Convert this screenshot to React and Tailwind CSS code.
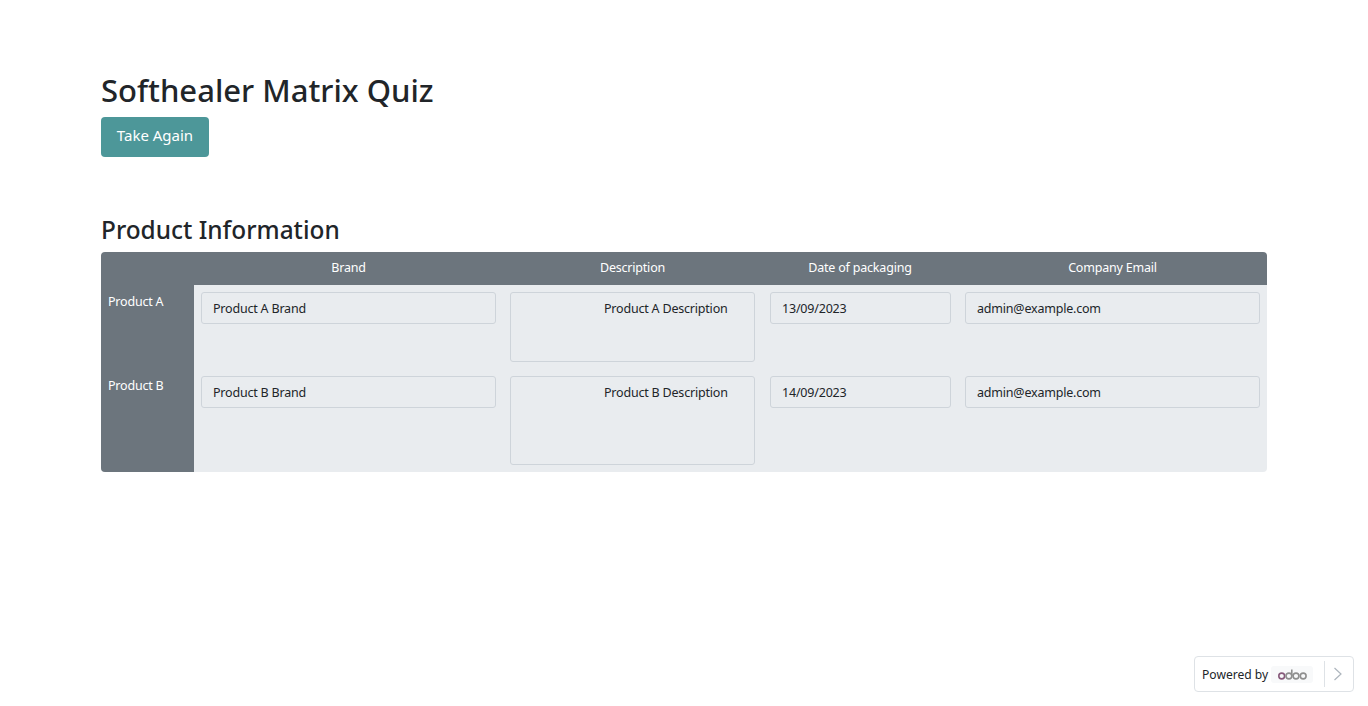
const rows = [
  { name: "Product A", brand: "Product A Brand", desc: "Product A Description", date: "13/09/2023", descH: "h-[70px]", rowH: "h-[84px]" },
  { name: "Product B", brand: "Product B Brand", desc: "Product B Description", date: "14/09/2023", descH: "h-[89px]", rowH: "h-[103px]" },
];

const Field = ({ children, className = "" }) => (
  <div className={`border border-[#ced4da] rounded-[3px] pt-[7px] pb-[5px] pr-3 leading-[18px] text-[#212529] ${className}`}>
    {children}
  </div>
);

export default function App() {
  return (
    <div className="min-h-[706px] bg-white font-['Noto_Sans',sans-serif] text-[#212529] relative">
      <main className="pt-[67px] pl-[101px] w-[1267px]">
        <h1 className="text-[31px] leading-[46px] font-medium">Softhealer Matrix Quiz</h1>
        <button className="mt-[4px] block w-[108px] h-[40px] pb-[3px] rounded-[4px] bg-[#4d9799] text-white text-[15px]">Take Again</button>
        <h2 className="mt-[57px] text-[24.4px] leading-[32px] font-medium">Product Information</h2>
        <table className="mt-[6px] w-[1166px] table-fixed border-separate border-spacing-0 rounded-[4px] overflow-hidden text-[12.5px] tracking-[-0.2px]">
          <thead>
            <tr className="h-[33px] bg-[#6c757d] text-white">
              <th className="w-[93px] font-normal"></th>
              <th className="w-[309px] font-normal">Brand</th>
              <th className="w-[259px] font-normal">Description</th>
              <th className="w-[196px] font-normal">Date of packaging</th>
              <th className="w-[309px] font-normal">Company Email</th>
            </tr>
          </thead>
          <tbody>
            {rows.map((r) => (
              <tr key={r.name} className={`${r.rowH} bg-[#e9ecef]`}>
                <td className="bg-[#6c757d] text-white align-top pl-[7px] pt-[8px] leading-[18px]">{r.name}</td>
                <td className="align-top px-[7px] pt-[7px]"><Field className="pl-[11px]">{r.brand}</Field></td>
                <td className="align-top px-[7px] pt-[7px]"><Field className={`pl-[93px] ${r.descH}`}>{r.desc}</Field></td>
                <td className="align-top pl-[8px] pr-[7px] pt-[7px]"><Field className="pl-[11px]">{r.date}</Field></td>
                <td className="align-top px-[7px] pt-[7px]"><Field className="pl-[11px]">admin@example.com</Field></td>
              </tr>
            ))}
          </tbody>
        </table>
      </main>
      <div className="absolute left-[1194px] top-[656px] w-[160px] h-[36px] border border-[#dee2e6] rounded-[4px] bg-white flex items-center pl-[7px] text-[12.1px]">
        <span className="pt-[2px]">Powered by</span>
        <span className="ml-[3px] w-[42px] h-[17px] rounded-[3px] bg-[#f8f9fa] flex items-center justify-center">
          <svg width="29" height="11" viewBox="0 0 29 11" fill="none" strokeWidth="1.6">
            <circle cx="3.7" cy="7" r="2.9" stroke="#875a7b" />
            <circle cx="10.9" cy="7" r="2.9" stroke="#8f8f8f" />
            <path d="M13.8 0.5V7" stroke="#8f8f8f" />
            <circle cx="18" cy="7" r="2.9" stroke="#8f8f8f" />
            <circle cx="25.2" cy="7" r="2.9" stroke="#8f8f8f" />
          </svg>
        </span>
        <span className="ml-[11px] h-[26px] border-l border-[#dee2e6] pl-[8px] flex items-center">
          <svg width="10" height="14" viewBox="0 0 10 14" fill="none" stroke="#adb5bd" strokeWidth="1.2"><path d="M1.5 1L8 7L1.5 13" /></svg>
        </span>
      </div>
    </div>
  );
}
